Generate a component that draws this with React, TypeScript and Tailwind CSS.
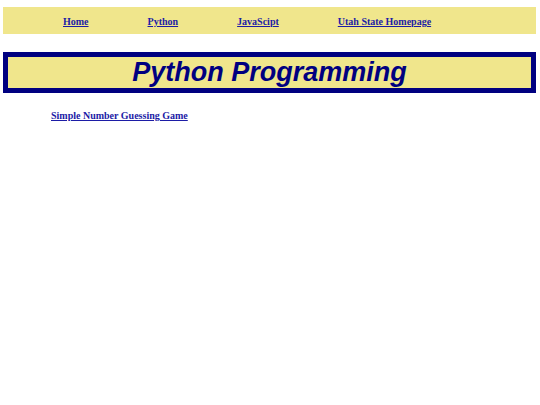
const NAV_LINKS = ["Home", "Python", "JavaScipt", "Utah State Homepage"];

export default function App() {
  return (
    <div className="min-h-screen bg-white pl-[3px] pr-[4px] pt-[7px] font-['Liberation_Serif',serif]">
      {/* Top navigation */}
      <nav className="flex h-[27px] items-center gap-[59px] bg-[#f0e68c] pl-[60px] pt-[2px]">
        {NAV_LINKS.map((label) => (
          <a
            key={label}
            href="#"
            className="text-[10px] font-bold text-[#1c1ca6] underline"
          >
            {label}
          </a>
        ))}
      </nav>

      {/* Page title */}
      <div className="mt-[18px] border-[5px] border-[#000080] bg-[#f0e68c]">
        <h1 className="text-center font-['Liberation_Sans',Arial,sans-serif] text-[27px] font-bold italic leading-[31px] text-[#000080]">
          Python Programming
        </h1>
      </div>

      {/* Project links */}
      <div className="mt-[15px] pl-[48px] text-[10px]">
        <a href="#" className="font-bold text-[#1c1ca6] underline">
          Simple Number Guessing Game
        </a>
      </div>
    </div>
  );
}
